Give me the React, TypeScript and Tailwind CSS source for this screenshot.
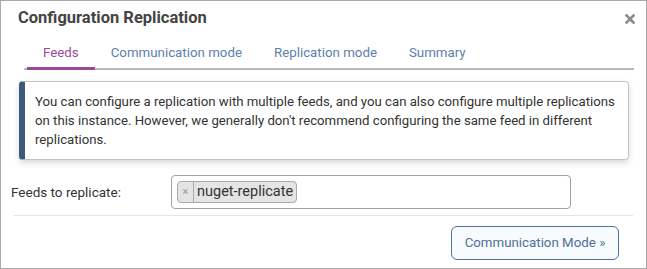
const tabs = ['Feeds', 'Communication mode', 'Replication mode', 'Summary'];

export default function App() {
  return (
    <div
      className="w-[647px] h-[269px] bg-white border border-[#a9a9a9] text-[#333] overflow-hidden"
      style={{ fontFamily: 'Roboto, "Noto Sans", Arial, sans-serif' }}
    >
      <div className="flex items-center justify-between pl-[17px] pr-[11px] h-[34px]">
        <h2 className="text-[16.5px] font-bold text-[#444]">Configuration Replication</h2>
        <svg width="10" height="10" viewBox="0 0 10 10" className="mt-[1px]">
          <path d="M1.5 1.5 L8.5 8.5 M8.5 1.5 L1.5 8.5" stroke="#8a8a8a" strokeWidth="2.6" strokeLinecap="square" />
        </svg>
      </div>

      <div className="ml-[23px] mr-[12px] flex border-b-2 border-[#b8b8b8] h-[35px]">
        {tabs.map((t, i) => (
          <div
            key={t}
            className={`px-4 text-[13.3px] flex items-center pt-[3px] ${i === 0 ? 'ml-[3px] text-[#9b4a96] border-b-[3px] border-[#9b4a96] -mb-[2px]' : 'text-[#5c7fab]'}`}
          >
            {t}
          </div>
        ))}
      </div>

      <div className="mt-[11px] ml-[18px] w-[610px] border border-[#c4c4c4] border-l-[6px] border-l-[#3d5c7b] rounded-[4px] pl-[10px] pr-[4px] py-[10px] text-[13.2px] leading-[19px] text-[#333] shadow-[0_3px_6px_rgba(0,0,0,0.15)]">
        You can configure a replication with multiple feeds, and you can also configure multiple replications
        on this instance. However, we generally don't recommend configuring the same feed in different
        replications.
      </div>

      <div className="mx-[13px] mt-[15px] flex items-center border-b border-[#e3e3e3] pb-[6px]">
        <label className="w-[160px] -ml-[3px] text-[13.5px] text-[#333]">Feeds to replicate:</label>
        <div className="w-[400px] h-[34px] border border-[#a0a0a0] rounded-[4px] flex items-center px-[5px]">
          <span className="flex items-center h-[22px] border border-[#aaa] bg-[#e4e4e4] rounded-[4px] text-[14.5px] text-[#333]">
            <span className="w-[16px] h-full flex items-center justify-center text-[11px] text-[#999] border-r border-[#aaa]">×</span>
            <span className="pl-[3px] pr-[3px] leading-none">nuget-replicate</span>
          </span>
        </div>
      </div>

      <div className="flex justify-end mr-[27px] mt-[10px]">
        <button className="h-[34px] w-[168px] border border-[#4d74a2] rounded-[6px] bg-[#f8fbfe] text-[13.3px] text-[#4f6f97]">
          Communication Mode »
        </button>
      </div>
    </div>
  );
}
